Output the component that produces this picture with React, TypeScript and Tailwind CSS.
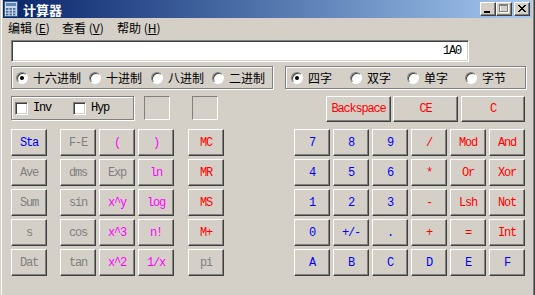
import React from 'react';

// Windows classic bevels
const raised =
  'bg-[#d4d0c8] border border-t-white border-l-white border-r-[#404040] border-b-[#404040] shadow-[inset_-1px_-1px_#808080]';
const sunken =
  'border border-t-[#808080] border-l-[#808080] border-r-white border-b-white shadow-[inset_1px_1px_#404040,inset_-1px_-1px_#d4d0c8]';
const thinSunken = 'border border-t-[#808080] border-l-[#808080] border-r-white border-b-white';
const etched = 'border border-[#808080] shadow-[inset_1px_1px_white,1px_1px_white]';

const mono = "font-['Liberation_Mono',monospace] text-[12px] tracking-[-1.2px]";
const cjk = "font-['Noto_Sans_CJK_SC','Noto_Sans',sans-serif] text-[12px]";

const tone: Record<string, string> = {
  b: 'text-[#0000ff]',
  r: 'text-[#ff0000]',
  m: 'text-[#ff00ff]',
  g: 'text-[#808080]',
};

const leftRows = [
  [['Sta', 'b'], ['F-E', 'g'], ['(', 'm'], [')', 'm'], ['MC', 'r']],
  [['Ave', 'g'], ['dms', 'g'], ['Exp', 'g'], ['ln', 'm'], ['MR', 'r']],
  [['Sum', 'g'], ['sin', 'g'], ['x^y', 'm'], ['log', 'm'], ['MS', 'r']],
  [['s', 'g'], ['cos', 'g'], ['x^3', 'm'], ['n!', 'm'], ['M+', 'r']],
  [['Dat', 'g'], ['tan', 'g'], ['x^2', 'm'], ['1/x', 'm'], ['pi', 'g']],
];

const rightRows = [
  [['7', 'b'], ['8', 'b'], ['9', 'b'], ['/', 'r'], ['Mod', 'r'], ['And', 'r']],
  [['4', 'b'], ['5', 'b'], ['6', 'b'], ['*', 'r'], ['Or', 'r'], ['Xor', 'r']],
  [['1', 'b'], ['2', 'b'], ['3', 'b'], ['-', 'r'], ['Lsh', 'r'], ['Not', 'r']],
  [['0', 'b'], ['+/-', 'b'], ['.', 'b'], ['+', 'r'], ['=', 'r'], ['Int', 'r']],
  [['A', 'b'], ['B', 'b'], ['C', 'b'], ['D', 'b'], ['E', 'b'], ['F', 'b']],
];

function Key({ label, c, className = 'w-[36px] h-[27px]' }: { label: string; c: string; className?: string }) {
  return (
    <div className={`${raised} ${className} ${mono} ${tone[c]} flex items-center justify-center leading-none`}>
      {label}
    </div>
  );
}

function Radio({ checked, label, className = '' }: { checked?: boolean; label: string; className?: string }) {
  return (
    <div className={`flex items-center gap-[5px] ${className}`}>
      <span className="w-[12px] h-[12px] rounded-full bg-white border border-t-[#808080] border-l-[#808080] border-r-white border-b-white shadow-[inset_1px_1px_#404040] flex items-center justify-center">
        {checked && <span className="w-[4px] h-[4px] rounded-full bg-black" />}
      </span>
      <span className={`${cjk} text-black leading-none`}>{label}</span>
    </div>
  );
}

function Check({ label, className = '' }: { label: string; className?: string }) {
  return (
    <div className={`flex items-center gap-[5px] ${className}`}>
      <span className={`w-[13px] h-[13px] bg-white ${sunken}`} />
      <span className={`${mono} text-black`}>{label}</span>
    </div>
  );
}

function CalcIcon() {
  return (
    <svg width="14" height="16" viewBox="0 0 14 16">
      <rect x="0.5" y="0.5" width="13" height="15" fill="#c8d8ec" stroke="#3a5a8a" />
      <rect x="2" y="2" width="10" height="3" fill="#5a8ab0" />
      {[0, 1, 2].map((r) =>
        [0, 1, 2].map((c) => (
          <rect key={`${r}${c}`} x={2 + c * 3.5} y={7 + r * 2.8} width="2.4" height="1.8" fill="#4a6c96" />
        ))
      )}
    </svg>
  );
}

export default function App() {
  return (
    <div className="w-[535px] h-[295px] bg-[#d4d0c8] px-[3px] overflow-hidden shadow-[inset_1px_0_#d4d0c8,inset_2px_0_white,inset_-1px_0_#404040,inset_-2px_0_#808080] select-none">
      {/* title bar */}
      <div className="h-[18px] flex items-center bg-linear-to-r from-[#0a246a] to-[#a6caf0] pr-[2px]">
        <div className="ml-[1px]">
          <CalcIcon />
        </div>
        <span className="ml-[5px] font-['Noto_Sans_CJK_SC',sans-serif] text-[13px] font-bold text-white leading-none">
          计算器
        </span>
        <div className="ml-auto flex items-center">
          <div className={`${raised} w-[16px] h-[14px] flex`}>
            <svg width="14" height="12" viewBox="0 0 14 12">
              <rect x="3" y="8" width="6" height="2" fill="black" />
            </svg>
          </div>
          <div className={`${raised} w-[16px] h-[14px] flex`}>
            <svg width="14" height="12" viewBox="0 0 14 12">
              <rect x="3.5" y="2.5" width="8" height="7" fill="none" stroke="white" />
              <rect x="2.5" y="1.5" width="8" height="7" fill="none" stroke="#808080" />
              <rect x="2" y="1" width="9" height="2" fill="#808080" />
            </svg>
          </div>
          <div className={`${raised} ml-[2px] w-[16px] h-[14px] flex`}>
            <svg width="14" height="12" viewBox="0 0 14 12">
              <path d="M3 2 L10 9 M4 2 L11 9 M10 2 L3 9 M11 2 L4 9" stroke="black" strokeWidth="1" />
            </svg>
          </div>
        </div>
      </div>

      {/* menu */}
      <div className={`h-[20px] flex items-center ${cjk} text-black`}>
        <span className="ml-[5px] w-[54px]">
          编辑 (<span className="underline">E</span>)
        </span>
        <span className="w-[55px]">
          查看 (<span className="underline">V</span>)
        </span>
        <span>
          帮助 (<span className="underline">H</span>)
        </span>
      </div>

      <div className="pl-[8px]">
        {/* display */}
        <div className={`mt-[2px] w-[458px] h-[22px] bg-white ${sunken} flex items-center justify-end pr-[7px] ${mono} text-black`}>
          1A0
        </div>

        {/* radix / word size */}
        <div className="mt-[4px] flex">
          <div className={`w-[262px] h-[23px] ${etched} flex items-center pl-[4px]`}>
            <Radio checked label="十六进制" />
            <Radio label="十进制" className="ml-[8px]" />
            <Radio label="八进制" className="ml-[9px]" />
            <Radio label="二进制" className="ml-[8px]" />
          </div>
          <div className={`ml-[12px] w-[241px] h-[23px] ${etched} flex items-center pl-[5px]`}>
            <Radio checked label="四字" />
            <Radio label="双字" className="ml-[18px]" />
            <Radio label="单字" className="ml-[16px]" />
            <Radio label="字节" className="ml-[17px]" />
          </div>
        </div>

        {/* inv/hyp, paren and memory indicators, edit keys */}
        <div className="mt-[7px] flex items-start">
          <div className={`w-[123px] h-[24px] ${etched} flex items-center pl-[3px]`}>
            <Check label="Inv" />
            <Check label="Hyp" className="ml-[22px]" />
          </div>
          <div className={`ml-[10px] w-[26px] h-[24px] ${thinSunken}`} />
          <div className={`ml-[22px] w-[26px] h-[24px] ${thinSunken}`} />
          <Key label="Backspace" c="r" className="ml-[108px] w-[65px] h-[26px]" />
          <Key label="CE" c="r" className="ml-[2px] w-[65px] h-[26px]" />
          <Key label="C" c="r" className="ml-[3px] w-[64px] h-[26px]" />
        </div>

        {/* key grid */}
        <div className="mt-[7px] flex flex-col gap-[3px]">
          {leftRows.map((row, i) => (
            <div key={i} className="flex">
              <Key label={row[0][0]} c={row[0][1]} />
              <div className="ml-[13px] flex gap-[3px]">
                {row.slice(1, 4).map(([l, c]) => (
                  <Key key={l} label={l} c={c} />
                ))}
              </div>
              <div className="ml-[14px]">
                <Key label={row[4][0]} c={row[4][1]} />
              </div>
              <div className="ml-[70px] flex gap-[3px]">
                {rightRows[i].map(([l, c]) => (
                  <Key key={l} label={l} c={c} />
                ))}
              </div>
            </div>
          ))}
        </div>
      </div>
    </div>
  );
}
